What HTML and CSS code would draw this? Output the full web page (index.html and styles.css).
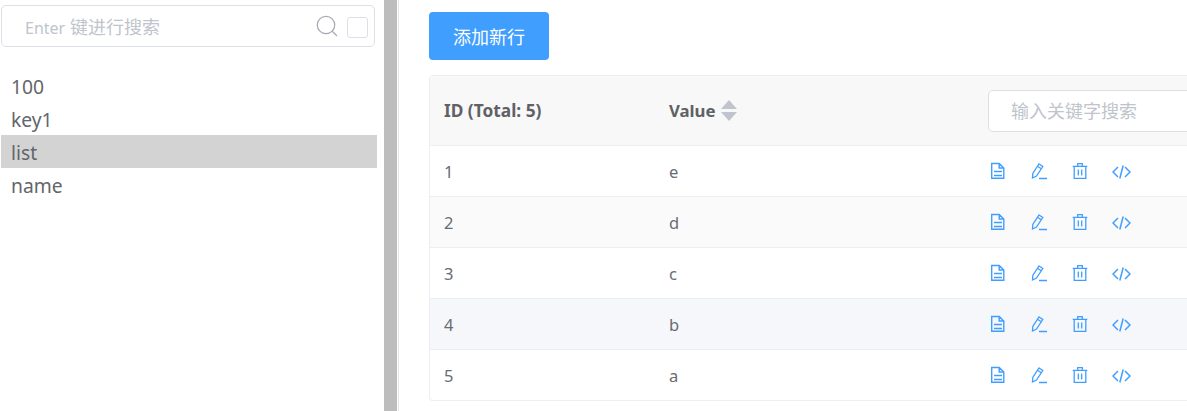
FILE: index.html
```html
<!DOCTYPE html>
<html lang="zh">
<head>
<meta charset="utf-8">
<title>list</title>
<link rel="stylesheet" href="styles.css">
</head>
<body>
<svg class="defs" width="0" height="0" aria-hidden="true">
  <symbol id="i-doc" viewBox="0 0 16 18"><path d="M1.700 1.500h7.500l4.600 4.500v10.300H1.700z M9.200 1.500v4.500h4.600 M4 9.500h8 M4 13.500h8" fill="none" stroke="currentColor" stroke-width="1.400"/></symbol>
  <symbol id="i-edit" viewBox="0 0 17 18"><path d="M8 2l3.800 2.500-6.300 9.500-4 2 .3-4.500z M6.500 4.200l3.800 2.500 M8 16.500h8" fill="none" stroke="currentColor" stroke-width="1.300"/></symbol>
  <symbol id="i-trash" viewBox="0 0 16 18"><path d="M.7 4.300h14.600 M2.200 4.300v12.100h11.600V4.300 M5.700 4.300V1.600h4.600v2.700 M6.300 7.500v6 M9.700 7.500v6" fill="none" stroke="currentColor" stroke-width="1.300"/></symbol>
  <symbol id="i-code" viewBox="0 0 19 18"><path d="M6 5l-5 5 5 5 M13 5l5 5-5 5 M11.200 3.500L7.800 16.500" fill="none" stroke="currentColor" stroke-width="1.500"/></symbol>
</svg>
<div class="app">
  <aside class="side">
    <div class="search">
      <span class="search-text"><span class="latin">Enter</span> 键进行搜索</span>
      <svg class="search-icon" viewBox="0 0 22 22" width="22" height="22"><circle cx="10" cy="10" r="8.700" fill="none" stroke="currentColor" stroke-width="1.300"/><path d="M16.300 16.300L21 21" stroke="currentColor" stroke-width="1.300"/></svg>
      <span class="check"></span>
    </div>
    <ul class="keys">
      <li>100</li>
      <li>key1</li>
      <li class="active">list</li>
      <li>name</li>
    </ul>
  </aside>
  <div class="splitter"></div>
  <main class="main">
    <button class="add">添加新行</button>
    <div class="table">
      <div class="row head">
        <div class="c1">ID (Total: 5)</div>
        <div class="c2">Value
          <span class="sort"><i class="up"></i><i class="down"></i></span>
        </div>
        <div class="c3"><div class="filter">输入关键字搜索</div></div>
      </div>
      <div class="row"><div class="c1">1</div><div class="c2">e</div><div class="c3 ops"><svg class="o1"><use href="#i-doc"/></svg><svg class="o2"><use href="#i-edit"/></svg><svg class="o3"><use href="#i-trash"/></svg><svg class="o4"><use href="#i-code"/></svg></div></div>
      <div class="row alt"><div class="c1">2</div><div class="c2">d</div><div class="c3 ops"><svg class="o1"><use href="#i-doc"/></svg><svg class="o2"><use href="#i-edit"/></svg><svg class="o3"><use href="#i-trash"/></svg><svg class="o4"><use href="#i-code"/></svg></div></div>
      <div class="row"><div class="c1">3</div><div class="c2">c</div><div class="c3 ops"><svg class="o1"><use href="#i-doc"/></svg><svg class="o2"><use href="#i-edit"/></svg><svg class="o3"><use href="#i-trash"/></svg><svg class="o4"><use href="#i-code"/></svg></div></div>
      <div class="row hover"><div class="c1">4</div><div class="c2">b</div><div class="c3 ops"><svg class="o1"><use href="#i-doc"/></svg><svg class="o2"><use href="#i-edit"/></svg><svg class="o3"><use href="#i-trash"/></svg><svg class="o4"><use href="#i-code"/></svg></div></div>
      <div class="row"><div class="c1">5</div><div class="c2">a</div><div class="c3 ops"><svg class="o1"><use href="#i-doc"/></svg><svg class="o2"><use href="#i-edit"/></svg><svg class="o3"><use href="#i-trash"/></svg><svg class="o4"><use href="#i-code"/></svg></div></div>
    </div>
  </main>
</div>
</body>
</html>
```
FILE: styles.css
```css
* { box-sizing: border-box; }
html, body { margin: 0; height: 100%; overflow: hidden; background: #fff; }
body { font-family: "Noto Sans", "Open Sans", "Noto Sans CJK SC", sans-serif; color: #606266; }
.defs { position: absolute; }
.app { display: flex; height: 411px; width: 1187px; }
.side { width: 384px; flex: none; padding: 5px 7px 0 1px; }
.search { height: 42px; width: 374px; border: 1px solid #dcdfe6; border-radius: 5px; display: flex; align-items: center; padding-left: 23px; padding-right: 6px; }
.search-text { flex: 1; font-size: 18px; color: #c0c4cc; }
.latin { font-size: 16px; }
.search-icon { color: #a8abb2; flex: none; margin-right: 9px; margin-top: -1px; }
.check { width: 21px; height: 21px; border: 1px solid #dcdfe6; border-radius: 3px; flex: none; margin-top: 3px; }
.keys { list-style: none; margin: 22px 0 0; padding: 0; width: 376px; }
.keys li { height: 33px; line-height: 35px; padding-left: 10px; font-size: 19.300px; font-weight: 400; color: #63656a; }
.keys .active { background: #d3d3d3; }
.splitter { width: 13px; flex: none; background: #bdbdbd; }
.main { flex: none; width: 789px; margin-left: 1px; border-left: 1px solid #e4e7ed; padding: 12px 0 0 30px; overflow: hidden; }
.add { display: block; width: 120px; height: 48px; padding: 0; border: 0; border-radius: 4px; background: #409eff; color: #fff; font-family: inherit; font-size: 18px; }
.table { margin-top: 15px; width: 780px; border: 1px solid #ebeef5; border-right: 0; border-radius: 4px 0 0 4px; }
.row { display: grid; grid-template-columns: 225px 319px 1fr; height: 51px; align-items: center; border-top: 1px solid #ebeef5; font-size: 16.500px; color: #6a6c71; }
.row > div { padding-left: 14px; }
.head { height: 69px; border-top: 0; background: #f8f8f9; font-weight: 700; color: #5f6166; font-size: 17.300px; }
.head .c2 { font-size: 16.800px; }
.alt { background: #fafafa; }
.hover { background: #f5f7fa; }
.c2 { display: flex; align-items: center; gap: 5px; }
.sort { display: inline-flex; flex-direction: column; gap: 3px; }
.sort i { display: block; width: 0; height: 0; border-left: 8px solid transparent; border-right: 8px solid transparent; }
.sort .up { border-bottom: 9px solid #c0c4cc; }
.sort .down { border-top: 9px solid #c0c4cc; }
.filter { width: 230px; height: 42px; background: #fff; border: 1px solid #dcdfe6; border-radius: 5px; padding-left: 22px; line-height: 40px; font-size: 18px; font-weight: 400; color: #c0c4cc; }
.ops { display: flex; align-items: center; color: #409eff; }
.row > .ops { padding-left: 16px; }
.ops svg { height: 18px; flex: none; }
.o1 { width: 16px; margin-right: 25px; }
.o2 { width: 17px; margin-right: 24px; }
.o3 { width: 16px; margin-right: 24px; }
.o4 { width: 19px; }
```
